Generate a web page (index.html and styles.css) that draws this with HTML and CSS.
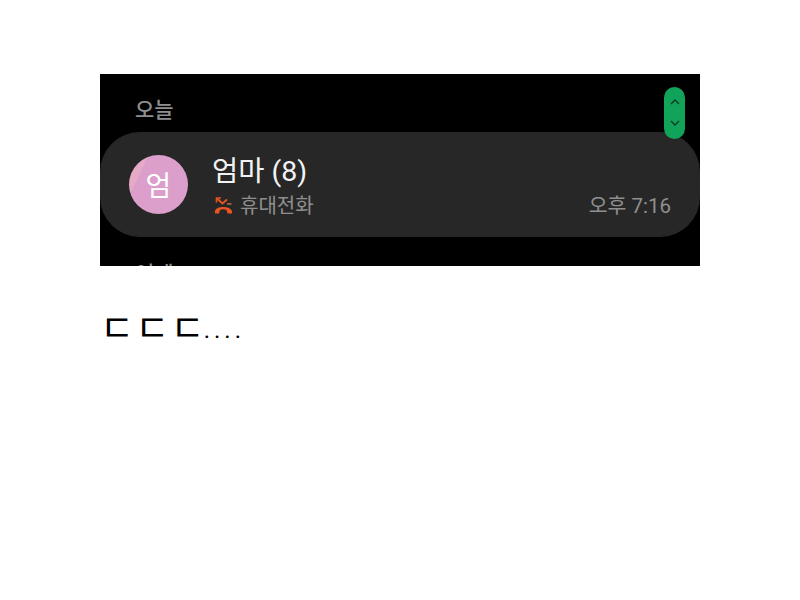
FILE: index.html
```html
<!DOCTYPE html>
<html lang="ko">
<head>
  <meta charset="UTF-8">
  <title>통화 기록</title>
  <link rel="stylesheet" href="styles.css">
</head>
<body>

<div class="post">
  <div class="call-log">
    <div class="day-label">오늘</div>
    <div class="call-row">
      <div class="avatar"><span>엄</span></div>
      <div class="call-info">
        <div class="call-name">엄마 (8)</div>
        <div class="call-type">
          <svg class="missed-icon" width="19" height="19" viewBox="0 0 19 19">
            <path d="M3.5 3 L8.5 7.5 L13 3.5" fill="none" stroke="#ea5420" stroke-width="1.8"/>
            <path d="M2.5 6.5 V2 H7" fill="none" stroke="#ea5420" stroke-width="1.6"/>
            <path d="M13 7 H17.5 V8.8 H13 Z" fill="#a5604a"/>
            <path d="M1 15 C2 9.5 16 9.5 18 15 L18 17.5 L13.5 17.5 L12.5 14 C10.5 13 8 13 6 14 L5 17.5 L1 17.5 Z" fill="#ea5420"/>
          </svg>
          <span>휴대전화</span>
        </div>
      </div>
      <div class="call-time">오후 7:16</div>
    </div>
    <div class="day-label day-next">어제</div>
    <div class="scroll-pill">
      <svg width="12" height="36" viewBox="0 0 12 36">
        <path d="M2 9 L6 5 L10 9" fill="none" stroke="#0a3d20" stroke-width="1.4"/>
        <path d="M2 26 L6 30 L10 26" fill="none" stroke="#0a3d20" stroke-width="1.4"/>
      </svg>
    </div>
  </div>
  <p class="comment">ㄷ ㄷ ㄷ <span class="dots">....</span></p>
</div>

</body>
</html>
```

FILE: styles.css
```css
body {
  margin: 0;
  background-color: #fff;
  font-family: "Roboto", "Noto Sans CJK KR", sans-serif;
}

.post {
  width: 600px;
  margin: 0 auto;
  padding-top: 74px;
}

.call-log {
  position: relative;
  height: 192px;
  overflow: hidden;
  background-color: #000;
}

.day-label {
  height: 58px;
  padding: 23px 0 0 35px;
  box-sizing: border-box;
  font-size: 21px;
  font-weight: 500;
  line-height: 26px;
  color: #8f8f8f;
}

.day-next {
  padding-top: 24px;
}

.call-row {
  display: flex;
  align-items: center;
  height: 105px;
  padding: 0 29px;
  box-sizing: border-box;
  background-color: #272727;
  border-radius: 40px;
}

.avatar {
  display: flex;
  align-items: center;
  justify-content: center;
  width: 59px;
  height: 59px;
  margin-bottom: 1px;
  border-radius: 50%;
  background: linear-gradient(115deg, #e6a9c6 0 22%, #dc9ecb 23% 100%);
  color: #fff;
  font-size: 28px;
}

.call-info {
  flex: 1;
  margin-left: 24px;
  padding-top: 3px;
}

.call-name {
  font-size: 28.5px;
  line-height: 36px;
  color: #f2f2f2;
}

.call-type {
  display: flex;
  align-items: center;
  gap: 7px;
  margin: 3px 0 0 2px;
  font-size: 20px;
  line-height: 26px;
  color: #8f8f8f;
}

.call-time {
  align-self: flex-end;
  margin-bottom: 18px;
  font-size: 20.5px;
  line-height: 26px;
  color: #8f8f8f;
}

.scroll-pill {
  position: absolute;
  top: 13px;
  right: 15px;
  display: flex;
  align-items: center;
  justify-content: center;
  width: 21px;
  height: 52px;
  border-radius: 11px;
  background-color: #12a35a;
}

.comment {
  margin: 41px 0 0 0;
  font-size: 37px;
  word-spacing: -8px;
  line-height: 46px;
  color: #000;
  white-space: nowrap;
}

.dots {
  margin-left: -2px;
  font-size: 24px;
  letter-spacing: 4px;
  vertical-align: 4px;
}
```
